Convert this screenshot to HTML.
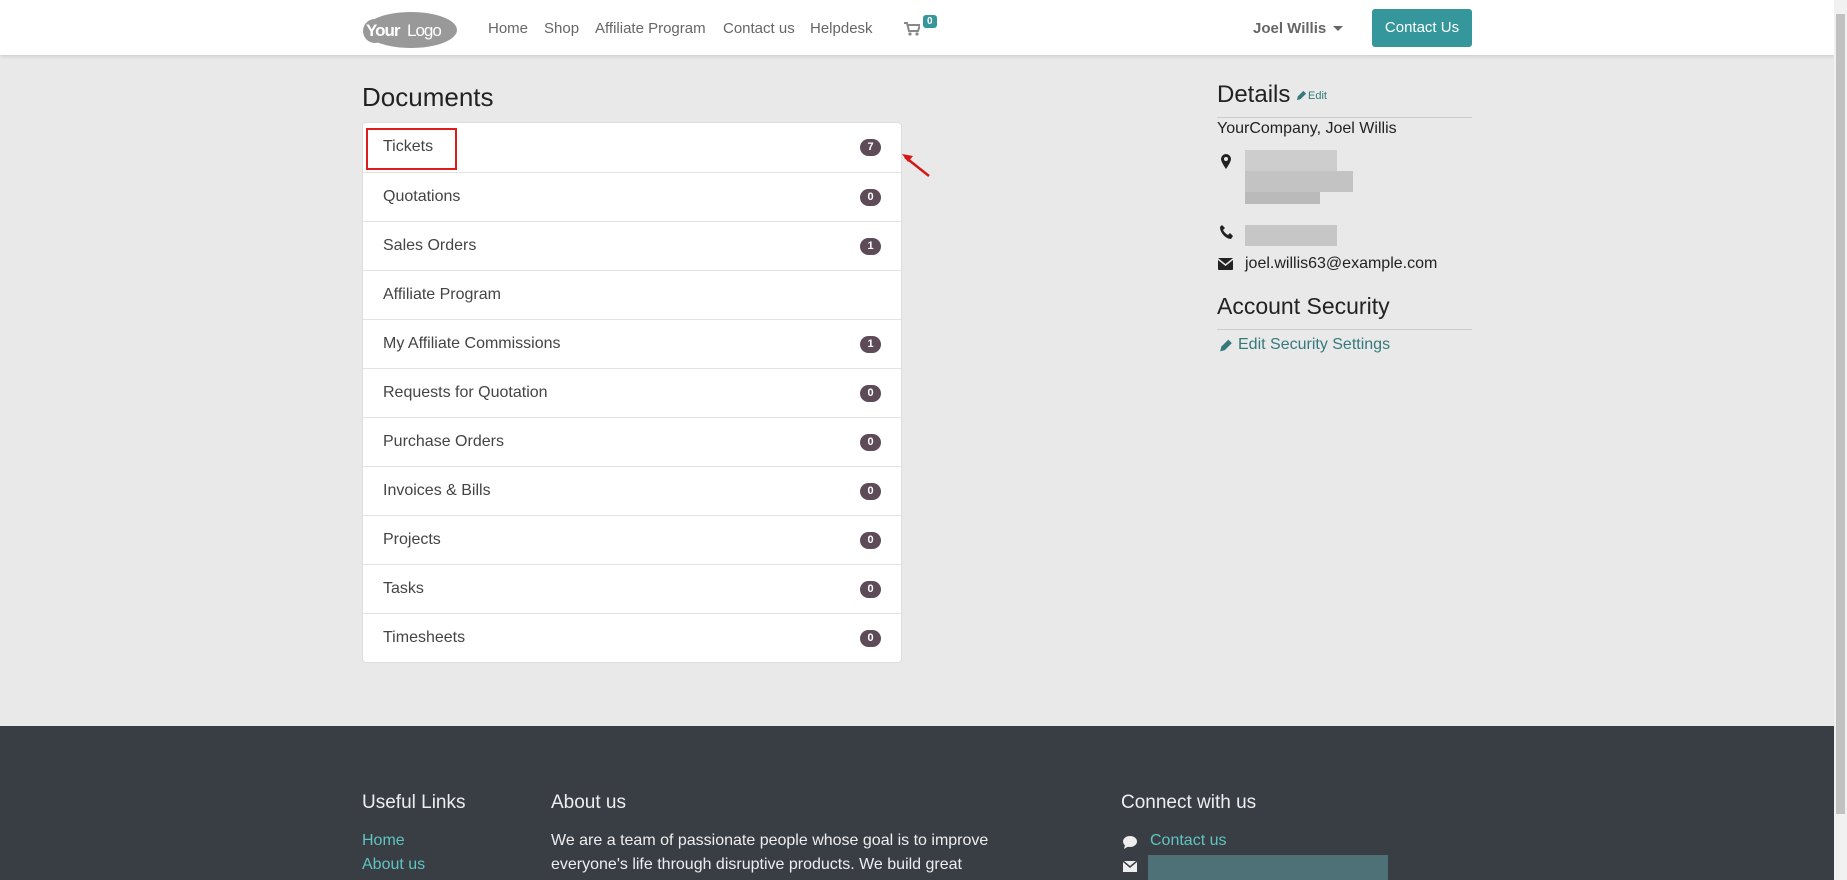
<!DOCTYPE html>
<html><head><meta charset="utf-8"><style>
*{box-sizing:border-box;margin:0;padding:0}
body{width:1847px;height:880px;overflow:hidden;background:#e9e9e9;font-family:"Liberation Sans",sans-serif;position:relative;color:#222}
.abs{position:absolute}
nav{position:absolute;left:0;top:0;width:1834px;height:55px;background:#fff;box-shadow:0 1px 4px rgba(0,0,0,.15)}
.nl{position:absolute;top:20px;font-size:15px;color:#666}
.scroll{position:absolute;right:0;top:0;width:13px;height:880px;background:#f1f1f1}
.scroll div{position:absolute;left:2px;top:14px;width:9px;height:800px;background:#c1c1c1}
.list{position:absolute;left:362px;top:122px;width:540px;background:#fff;border:1px solid #ddd;border-radius:4px}
.row{height:49px;border-top:1px solid #e3e3e3;position:relative;font-size:16px;color:#444;padding:15px 0 0 20px}
.row:first-child{border-top:none}
.b{position:absolute;right:20px;top:16px;background:#5e4b58;color:#fff;font-size:11px;font-weight:bold;border-radius:9px;width:21px;height:17px;text-align:center;line-height:17px}
footer{position:absolute;left:0;top:726px;width:1834px;height:154px;background:#393d44;color:#eee}
.fh{position:absolute;top:66px;font-size:19px;color:#eee}
.fl{position:absolute;font-size:16px;color:#5fc4c2}
.ft{position:absolute;font-size:16px;color:#eee}
.blur{position:absolute;background:#cdcdcd}
</style></head><body>
<nav>
<svg class="abs" style="left:361px;top:11px" width="96" height="38" viewBox="0 0 96 38"><ellipse cx="50" cy="19" rx="46" ry="18" fill="#999"/><ellipse cx="14" cy="20" rx="12" ry="12" fill="#999"/><text x="5" y="25" font-family="Liberation Sans" font-weight="bold" font-size="17" fill="#fff" letter-spacing="-1">Your</text><text x="46" y="25" font-family="Liberation Sans" font-size="17" fill="#fff" letter-spacing="-1">Logo</text></svg>
<span class="nl" style="left:488px">Home</span>
<span class="nl" style="left:544px">Shop</span>
<span class="nl" style="left:595px">Affiliate Program</span>
<span class="nl" style="left:723px">Contact us</span>
<span class="nl" style="left:810px">Helpdesk</span>
<svg class="abs" style="left:904px;top:22px" width="16" height="14" viewBox="0 0 16 14"><path d="M0 1h3l2 8h9l2-6H4" fill="none" stroke="#888" stroke-width="2"/><circle cx="6" cy="12" r="1.6" fill="#888"/><circle cx="13" cy="12" r="1.6" fill="#888"/></svg>
<span class="abs" style="left:923px;top:15px;background:#35979c;color:#fff;font-size:10px;font-weight:bold;border-radius:3px;padding:1px 4px">0</span>
<span class="nl" style="left:1253px;font-weight:bold;color:#666">Joel Willis</span>
<span class="abs" style="left:1333px;top:26px;border-left:5px solid transparent;border-right:5px solid transparent;border-top:5px solid #666"></span>
<div class="abs" style="left:1372px;top:9px;width:100px;height:38px;background:#35979c;border-radius:3px;color:#fff;font-size:15px;text-align:center;line-height:38px">Contact Us</div>
</nav>
<div class="scroll"><div></div></div>
<div class="abs" style="left:362px;top:82px;font-size:26px;color:#222">Documents</div>
<div class="list">
<div class="row">Tickets<span class="b">7</span></div>
<div class="row">Quotations<span class="b">0</span></div>
<div class="row">Sales Orders<span class="b">1</span></div>
<div class="row">Affiliate Program</div>
<div class="row">My Affiliate Commissions<span class="b">1</span></div>
<div class="row">Requests for Quotation<span class="b">0</span></div>
<div class="row">Purchase Orders<span class="b">0</span></div>
<div class="row">Invoices &amp; Bills<span class="b">0</span></div>
<div class="row">Projects<span class="b">0</span></div>
<div class="row">Tasks<span class="b">0</span></div>
<div class="row">Timesheets<span class="b">0</span></div>
</div>
<div class="abs" style="left:366px;top:128px;width:91px;height:42px;border:2px solid #e01b1b"></div>
<svg class="abs" style="left:898px;top:150px" width="36" height="30"><line x1="31" y1="26" x2="7" y2="7" stroke="#d41818" stroke-width="2.5"/><path d="M4 4l11 2-5 6z" fill="#d41818"/></svg>

<div class="abs" style="left:1217px;top:81px;font-size:24px">Details</div>
<svg class="abs" style="left:1296px;top:90px" width="11" height="11" viewBox="0 0 12 12"><path d="M1 11l1-4 6-6 3 3-6 6z" fill="#35797c"/></svg>
<span class="abs" style="left:1308px;top:90px;font-size:11px;color:#35797c">Edit</span>
<div class="abs" style="left:1217px;top:117px;width:255px;height:1px;background:#ccc"></div>
<div class="abs" style="left:1217px;top:120px;font-size:16px">YourCompany, Joel Willis</div>
<svg class="abs" style="left:1221px;top:154px" width="10" height="15" viewBox="0 0 10 15"><path d="M5 0a5 5 0 0 1 5 5c0 3-5 10-5 10S0 8 0 5a5 5 0 0 1 5-5z" fill="#222"/><circle cx="5" cy="5" r="2" fill="#e9e9e9"/></svg>
<div class="blur" style="left:1245px;top:150px;width:92px;height:21px"></div>
<div class="blur" style="left:1245px;top:171px;width:108px;height:21px;background:#c3c3c3"></div>
<div class="blur" style="left:1245px;top:192px;width:75px;height:12px;background:#bababa"></div>
<svg class="abs" style="left:1220px;top:225px" width="13" height="14" viewBox="0 0 13 14"><path d="M2 0l3 3-2 2c1 2 3 4 5 5l2-2 3 3-2 3C6 14 0 8 0 2z" fill="#222"/></svg>
<div class="blur" style="left:1245px;top:225px;width:92px;height:21px;background:#c6c6c6"></div>
<svg class="abs" style="left:1218px;top:258px" width="15" height="12" viewBox="0 0 15 12"><rect width="15" height="12" rx="1" fill="#222"/><path d="M0 1l7.5 6L15 1" fill="none" stroke="#e9e9e9" stroke-width="1.5"/></svg>
<div class="abs" style="left:1245px;top:255px;font-size:16px">joel.willis63@example.com</div>
<div class="abs" style="left:1217px;top:293px;font-size:23px">Account Security</div>
<div class="abs" style="left:1217px;top:329px;width:255px;height:1px;background:#ccc"></div>
<svg class="abs" style="left:1219px;top:338px" width="14" height="15" viewBox="0 0 12 12"><path d="M1 11l1-4 6-6 3 3-6 6z" fill="#35797c"/></svg>
<div class="abs" style="left:1238px;top:336px;font-size:16px;color:#35797c">Edit Security Settings</div>

<footer>
<div class="fh" style="left:362px">Useful Links</div>
<div class="fh" style="left:551px">About us</div>
<div class="fh" style="left:1121px">Connect with us</div>
<div class="fl" style="left:362px;top:106px">Home</div>
<div class="fl" style="left:362px;top:130px">About us</div>
<div class="ft" style="left:551px;top:106px">We are a team of passionate people whose goal is to improve</div>
<div class="ft" style="left:551px;top:130px">everyone's life through disruptive products. We build great</div>
<svg class="abs" style="left:1123px;top:110px" width="14" height="13" viewBox="0 0 14 13"><ellipse cx="7" cy="5.5" rx="7" ry="5.5" fill="#eee"/><path d="M2 9l-1 4 5-3z" fill="#eee"/></svg>
<div class="fl" style="left:1150px;top:106px">Contact us</div>
<svg class="abs" style="left:1123px;top:135px" width="14" height="11" viewBox="0 0 14 11"><rect width="14" height="11" fill="#eee"/><path d="M0 0l7 6 7-6" fill="none" stroke="#393d44" stroke-width="1.5"/></svg>
<div class="abs" style="left:1148px;top:129px;width:240px;height:25px;background:#4e7077"></div>
</footer>
</body></html>
